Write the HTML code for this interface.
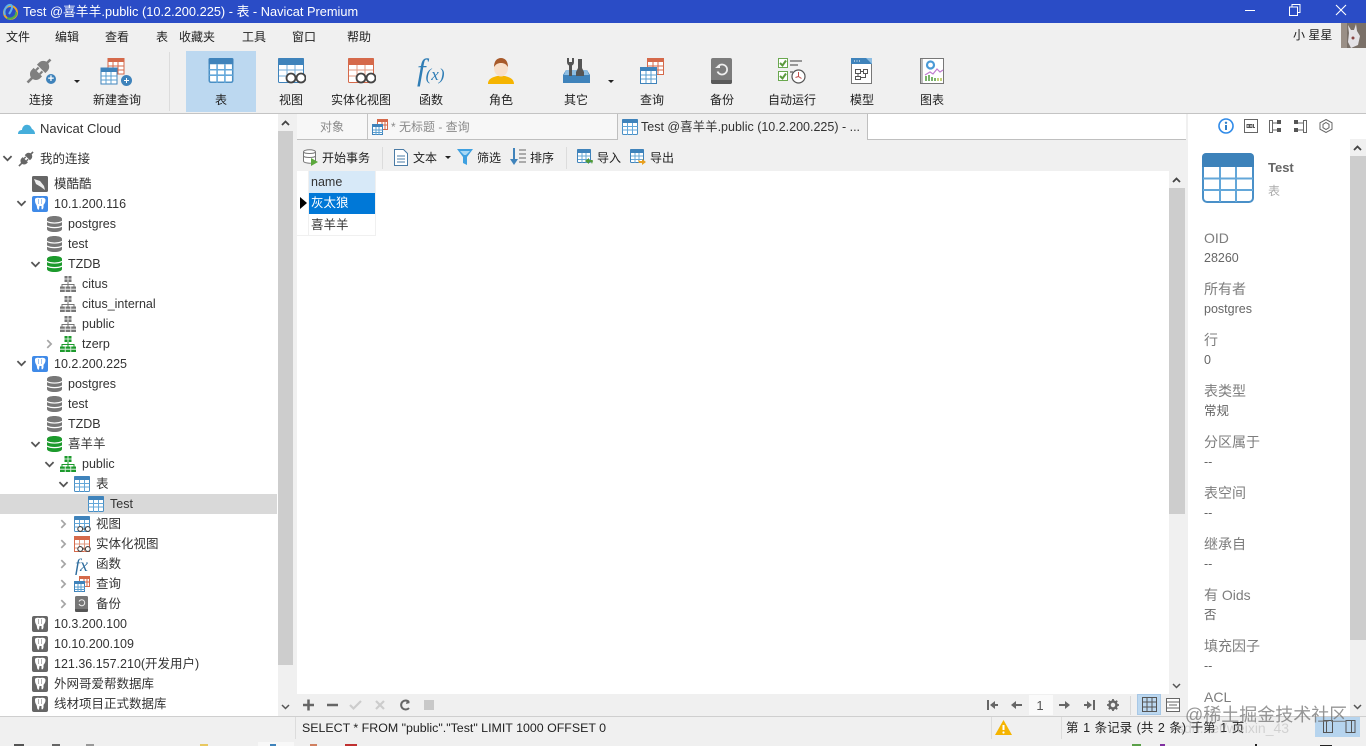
<!DOCTYPE html>
<html><head><meta charset="utf-8">
<style>
html,body{margin:0;padding:0;width:1366px;height:746px;overflow:hidden;background:#f0f0f0}
body{position:relative;font-family:"Liberation Sans","Noto Sans CJK SC",sans-serif;font-size:12px;color:#222}
.a,.t,svg.i{position:absolute}
.t{white-space:nowrap;line-height:16px;height:16px}
.c{text-align:center;transform:translateX(-50%)}
.n{font-size:12.5px;color:#333}
.l{font-size:14px;color:#7d7d7d;left:1204px;line-height:18px;height:18px}
.v{font-size:12.5px;color:#666;left:1204px}
svg.sd{width:11px;height:7px}
svg.sr{width:7px;height:10px}
svg.su{width:9px;height:6px}
</style></head><body>
<svg width="0" height="0" style="position:absolute">
<defs>
<symbol id="tb" viewBox="0 0 16 16"><rect x=".5" y=".5" width="15" height="15" rx="1" fill="#fff" stroke="#4a8fc4"/><rect x="0" y="0" width="16" height="4" rx="1" fill="#3f83bb"/><path d="M.5 7.5h15M.5 11h15M5.5 4v12M10.5 4v12" stroke="#63a7d9" fill="none"/></symbol>
<symbol id="db" viewBox="0 0 15 16"><path d="M0 3c0-4 15-4 15 0v10c0 4-15 4-15 0z" fill="currentColor"/><path d="M0 5.4c3 2.2 12 2.2 15 0M0 10c3 2.2 12 2.2 15 0" stroke="#fff" fill="none" stroke-width="1.2"/></symbol>
<symbol id="sc" viewBox="0 0 16 16"><g fill="currentColor"><rect x="4.500" y="0" width="7" height="6"/><rect x="0" y="10.500" width="4.800" height="5.500"/><rect x="5.600" y="10.500" width="4.800" height="5.500"/><rect x="11.200" y="10.500" width="4.800" height="5.500"/><path d="M7.500 6h1v2h6v2.500h-1V9h-5v1.500h-1V9h-5v1.500h-1V8h6z"/></g><path d="M4.500 3h7M8 0v6M0 13.200h4.800M5.600 13.200h4.800M11.200 13.200H16" stroke="#fff" stroke-width=".8" fill="none"/></symbol>
<symbol id="pg" viewBox="0 0 16 16"><rect width="16" height="16" rx="2" fill="currentColor"/><path d="M3 3.500C3 1.500 6 1.500 8 2c2-.5 5.500-.5 5.500 2 0 3-1.500 4-2 5v2c0 2-1.500 3-2 2v-3h-2L7 13.500C6 14 5 13 5 11L4.500 9C3 7 3 5 3 3.500z" fill="#fff"/><path d="M6.500 3v5M9.500 3v5" stroke="currentColor" stroke-opacity=".5" fill="none"/></symbol>
<symbol id="ad" viewBox="0 0 9 6"><path d="M1 1l3.500 3.500L8 1" fill="none" stroke="#555" stroke-width="1.500"/></symbol>
<symbol id="ar" viewBox="0 0 6 9"><path d="M1 1l3.500 3.500L1 8" fill="none" stroke="#a6a6a6" stroke-width="1.500"/></symbol>
<symbol id="up" viewBox="0 0 9 6"><path d="M1 5l3.500-3.500L8 5" fill="none" stroke="#444" stroke-width="1.800"/></symbol>
<symbol id="pl" viewBox="0 0 24 24"><g transform="rotate(45 12 12)" fill="currentColor"><path d="M6.500 13.500h11v2.500a5.500 5.500 0 0 1-11 0z"/><rect x="10.800" y="21" width="2.400" height="6"/><rect x="8.500" y="10" width="2" height="3.500"/><rect x="13.500" y="10" width="2" height="3.500"/><path d="M6.500 9.200h11V6.500a5.500 5.500 0 0 0-11 0z"/><rect x="10.800" y="-3" width="2.400" height="5"/></g></symbol>
<symbol id="gl" viewBox="0 0 14 6"><circle cx="3.200" cy="3" r="2.400" fill="#fff" stroke="#444" stroke-width="1.100"/><circle cx="10.800" cy="3" r="2.400" fill="#fff" stroke="#444" stroke-width="1.100"/><path d="M5.500 3h3" stroke="#444"/></symbol>
</defs>
</svg>

<!-- title bar -->
<div class="a" style="left:0;top:0;width:1366px;height:23px;background:#2a4cc6"></div>
<svg class="i" style="left:2px;top:3px" width="17" height="17" viewBox="0 0 17 17"><circle cx="8.500" cy="9.500" r="6.500" fill="none" stroke="#e8a62f" stroke-width="2"/><path d="M3 12C1 7 5 1 9 2c2 1 1 5-2 9" fill="none" stroke="#5fb2e8" stroke-width="2"/><path d="M5 15c5 2 10-2 9-6" fill="none" stroke="#4fae4f" stroke-width="2"/></svg>
<div class="t" style="left:23px;top:4px;color:#fff;font-size:12.8px">Test @喜羊羊.public (10.2.200.225) - 表 - Navicat Premium</div>
<div class="a" style="left:1245px;top:10px;width:10px;height:1px;background:#fff"></div>
<svg class="i" style="left:1289px;top:4px" width="12" height="12" viewBox="0 0 12 12"><path d="M3 2.500V.5h8v8H9M.5 3h8v8.500h-8z" fill="none" stroke="#fff"/></svg>
<svg class="i" style="left:1335px;top:4px" width="12" height="12" viewBox="0 0 12 12"><path d="M1 1l10 10M11 1L1 11" stroke="#fff" stroke-width="1.100"/></svg>

<!-- menu -->
<div class="t" style="left:6px;top:29px">文件</div>
<div class="t" style="left:55px;top:29px">编辑</div>
<div class="t" style="left:105px;top:29px">查看</div>
<div class="t" style="left:156px;top:29px">表</div>
<div class="t" style="left:179px;top:29px">收藏夹</div>
<div class="t" style="left:242px;top:29px">工具</div>
<div class="t" style="left:292px;top:29px">窗口</div>
<div class="t" style="left:347px;top:29px">帮助</div>
<div class="t" style="left:1293px;top:27px">小 星星</div>
<svg class="i" style="left:1341px;top:23px" width="25" height="25" viewBox="0 0 25 25"><rect width="25" height="25" fill="#7a7068"/><rect x="0" width="6" height="25" fill="#9a8f86"/><path d="M8 10l-1-8 3 5 3 0 2-6 1 7 3 5-2 9-7 3-3-6z" fill="#e4e2e6"/><circle cx="12" cy="15" r="1.500" fill="#844"/></svg>

<!-- toolbar -->
<div class="a" style="left:169px;top:52px;width:1px;height:59px;background:#dcdcdc"></div>
<div class="a" style="left:186px;top:51px;width:70px;height:61px;background:#bcd8f0"></div>

<svg class="i" style="left:26px;top:58px;color:#7f7f7f" width="26" height="26"><use href="#pl" width="26" height="26"/></svg>
<div class="a" style="left:46px;top:74px;width:10px;height:10px;border-radius:50%;background:#3f83bb"></div>
<div class="t" style="left:46px;top:71px;width:10px;color:#fff;font-size:11px;font-weight:bold;text-align:center">+</div>
<div class="a" style="left:74px;top:80px;border:3px solid transparent;border-top:3px solid #222"></div>
<!-- new query -->
<svg class="i" style="left:100px;top:58px" width="33" height="28" viewBox="0 0 33 28"><rect x="8" y="0" width="16" height="16" fill="#fff" stroke="#d5694a"/><rect x="8" y="0" width="16" height="4" fill="#d5694a"/><path d="M13 4v12M18 4v12M8 8h16M8 12h16" stroke="#d5694a" fill="none"/><rect x="1" y="10" width="16" height="16" fill="#fff" stroke="#3f83bb"/><rect x="1" y="10" width="16" height="4" fill="#3f83bb"/><path d="M6 14v12M11 14v12M1 18h16M1 22h16" stroke="#5a9fd0" fill="none"/><circle cx="26.500" cy="22.500" r="5.500" fill="#3f83bb"/><path d="M24 22.500h5M26.500 20v5" stroke="#fff"/></svg>
<!-- table -->
<svg class="i" style="left:208px;top:58px" width="26" height="25"><use href="#tb" width="26" height="25"/></svg>
<!-- view -->
<svg class="i" style="left:278px;top:58px" width="28" height="26" viewBox="0 0 28 26"><rect x=".5" y=".5" width="25" height="24" rx="1" fill="#fff" stroke="#3f83bb"/><rect width="26" height="7" rx="1" fill="#3f83bb"/><path d="M9 7v17M17 7v17M1 12h24M1 18h24" stroke="#75aeda" fill="none"/><circle cx="13" cy="20" r="4.500" fill="#fff" stroke="#444" stroke-width="1.800"/><circle cx="23" cy="20" r="4.500" fill="#fff" stroke="#444" stroke-width="1.800"/></svg>
<!-- mat view -->
<svg class="i" style="left:348px;top:58px" width="28" height="26" viewBox="0 0 28 26"><rect x=".5" y=".5" width="25" height="24" rx="1" fill="#fff" stroke="#d5694a"/><rect width="26" height="7" rx="1" fill="#d5694a"/><path d="M9 7v17M17 7v17M1 12h24M1 18h24" stroke="#e09a82" fill="none"/><circle cx="13" cy="20" r="4.500" fill="#fff" stroke="#444" stroke-width="1.800"/><circle cx="23" cy="20" r="4.500" fill="#fff" stroke="#444" stroke-width="1.800"/></svg>
<!-- fx -->
<div class="t" style="left:417px;top:55px;height:30px;line-height:30px;font-family:'Liberation Serif',serif;font-style:italic;color:#2f7db5"><span style="font-size:31px">f</span><span style="font-size:17px">(x)</span></div>
<!-- role -->
<svg class="i" style="left:488px;top:58px" width="26" height="26" viewBox="0 0 26 26"><path d="M0 26c0-6 6-7 9-8h8c3 1 9 2 9 8z" fill="#f5b400"/><ellipse cx="13" cy="10" rx="7" ry="8.500" fill="#f8dfc9"/><path d="M6 9c0-6 3-9 7-9s7 3 7 9c-2-3-4-4-7-4S8 6 6 9z" fill="#a85a2a"/></svg>
<!-- other -->
<svg class="i" style="left:563px;top:58px" width="27" height="25" viewBox="0 0 27 25"><path d="M3 12h21l3 5v8H0v-8z" fill="#3f83bb"/><path d="M3 12h21l2 5H1z" fill="#8dbde2"/><path d="M4 0v4c0 2 1 3 2 3.500V18h3V7.500c1-.5 2-1.500 2-3.500V0L9 0v4H6V0z" fill="#555"/><path d="M15 1h4v9l2 4v4h-8v-4l2-4z" fill="#555"/></svg>
<div class="a" style="left:608px;top:80px;border:3px solid transparent;border-top:3px solid #222"></div>
<!-- query -->
<svg class="i" style="left:640px;top:58px" width="24" height="26" viewBox="0 0 24 26"><rect x="7.500" y=".5" width="16" height="16" fill="#fff" stroke="#d5694a"/><rect x="7" y="0" width="17" height="4" fill="#d5694a"/><path d="M13 4v12M18 4v12M8 8h16M8 12h16" stroke="#d5694a" fill="none"/><rect x=".5" y="9.500" width="16" height="16" fill="#fff" stroke="#3f83bb"/><rect x="0" y="9" width="17" height="4" fill="#3f83bb"/><path d="M6 13v12M11 13v12M1 17h16M1 21h16" stroke="#5a9fd0" fill="none"/></svg>
<!-- backup -->
<svg class="i" style="left:711px;top:58px" width="21" height="26" viewBox="0 0 21 26"><rect width="21" height="26" rx="2" fill="#7c7c7c"/><path d="M0 22h21v2a2 2 0 0 1-2 2H2a2 2 0 0 1-2-2z" fill="#5a5a5a"/><path d="M6.500 9.500a5 5 0 1 1 0 4" fill="none" stroke="#eee" stroke-width="1.800"/><path d="M4 10h5V6z" fill="#eee"/></svg>
<!-- auto run -->
<svg class="i" style="left:778px;top:58px" width="28" height="26" viewBox="0 0 28 26"><rect x=".5" y=".5" width="9" height="9" fill="#fff" stroke="#6aa84f"/><rect x=".5" y="13.500" width="9" height="9" fill="#fff" stroke="#6aa84f"/><path d="M2 5l2.500 2.500L8 2.500M2 18l2.500 2.500L8 15.500" fill="none" stroke="#5c9a3e" stroke-width="2"/><path d="M12 3h12M12 7h8" stroke="#8a8a8a" stroke-width="1.800"/><path d="M12 14h3" stroke="#8a8a8a" stroke-width="1.800"/><circle cx="20.500" cy="18.500" r="6.500" fill="#fff" stroke="#555" stroke-width="1.200"/><path d="M20.500 14v4.500l3 2M20.500 18.500l-3 1" stroke="#c0504d" fill="none"/></svg>
<!-- model -->
<svg class="i" style="left:851px;top:58px" width="21" height="26" viewBox="0 0 21 26"><rect x=".5" y=".5" width="20" height="25" fill="#fff" stroke="#777"/><rect width="21" height="6" fill="#3f83bb"/><path d="M15 0h6v6z" fill="#8dbde2"/><path d="M3 3h1M5.500 3h1M8 3h1" stroke="#fff"/><path d="M4.500 11.500h5v4h-5zM12.500 11.500h4v4h-4zM4.500 18.500h5v3h-5zM9.500 13.500h3M7 15.500v3M14.500 15.500v4h-5" stroke="#555" fill="none"/></svg>
<!-- chart -->
<svg class="i" style="left:920px;top:58px" width="24" height="26" viewBox="0 0 24 26"><rect x=".5" y=".5" width="23" height="25" fill="#fff" stroke="#777"/><path d="M2 1v24" stroke="#777"/><circle cx="10.500" cy="7" r="3.500" fill="#fff" stroke="#4a9ad6" stroke-width="2.200"/><path d="M5 17l5-3 3 2 4-5 3 3 3-2" fill="none" stroke="#c07ad0" stroke-width="1.200"/><path d="M6 23v-5M9 23v-6M12 23v-4M15 23v-3" stroke="#5aa048" stroke-width="1.600"/><path d="M18 23v-3M21 23v-3" stroke="#b5c85a" stroke-width="1.600"/></svg>

<div class="t c" style="left:41px;top:92px">连接</div>
<div class="t c" style="left:117px;top:92px">新建查询</div>
<div class="t c" style="left:221px;top:92px">表</div>
<div class="t c" style="left:291px;top:92px">视图</div>
<div class="t c" style="left:361px;top:92px">实体化视图</div>
<div class="t c" style="left:431px;top:92px">函数</div>
<div class="t c" style="left:501px;top:92px">角色</div>
<div class="t c" style="left:576px;top:92px">其它</div>
<div class="t c" style="left:652px;top:92px">查询</div>
<div class="t c" style="left:722px;top:92px">备份</div>
<div class="t c" style="left:792px;top:92px">自动运行</div>
<div class="t c" style="left:862px;top:92px">模型</div>
<div class="t c" style="left:932px;top:92px">图表</div>

<div class="a" style="left:0;top:113px;width:1366px;height:1px;background:#c4c4c4"></div>

<!-- left tree -->
<div class="a" style="left:0;top:114px;width:278px;height:602px;background:#fff"></div>
<div class="a" style="left:0;top:494px;width:277px;height:20px;background:#d9d9d9"></div>
<svg class="i" style="left:18px;top:123px" width="17" height="11" viewBox="0 0 17 11"><path d="M0 11c0-3 2-4 4-4 0-3 3-6 6-5 2 0 3 2 4 4 2 1 3 3 3 5z" fill="#45aedb"/></svg>
<div class="t n" style="left:40px;top:121px;font-size:13px">Navicat Cloud</div>

<svg class="i sd" style="left:2px;top:155px"><use href="#ad" width="11" height="7"/></svg>
<svg class="i" style="left:18px;top:151px;color:#666" width="16" height="16"><use href="#pl" width="16" height="16"/></svg>
<div class="t n" style="left:40px;top:151px">我的连接</div>

<svg class="i" style="left:32px;top:176px" width="16" height="16" viewBox="0 0 16 16"><rect width="16" height="16" rx="1.500" fill="#666"/><path d="M2 3l6 2 4 5 1 4-4-3-5-3z" fill="#eee"/></svg>
<div class="t n" style="left:54px;top:176px">模酷酷</div>

<svg class="i sd" style="left:16px;top:200px"><use href="#ad" width="11" height="7"/></svg>
<svg class="i" style="left:32px;top:196px;color:#3f8ae8" width="16" height="16"><use href="#pg" width="16" height="16"/></svg>
<div class="t n" style="left:54px;top:196px">10.1.200.116</div>

<svg class="i" style="left:47px;top:216px;color:#777" width="15" height="16"><use href="#db" width="15" height="16"/></svg>
<div class="t n" style="left:68px;top:216px">postgres</div>
<svg class="i" style="left:47px;top:236px;color:#777" width="15" height="16"><use href="#db" width="15" height="16"/></svg>
<div class="t n" style="left:68px;top:236px">test</div>
<svg class="i sd" style="left:30px;top:261px"><use href="#ad" width="11" height="7"/></svg>
<svg class="i" style="left:47px;top:256px;color:#1c9a2c" width="15" height="16"><use href="#db" width="15" height="16"/></svg>
<div class="t n" style="left:68px;top:256px">TZDB</div>

<svg class="i" style="left:60px;top:276px;color:#777" width="16" height="16"><use href="#sc" width="16" height="16"/></svg>
<div class="t n" style="left:82px;top:276px">citus</div>
<svg class="i" style="left:60px;top:296px;color:#777" width="16" height="16"><use href="#sc" width="16" height="16"/></svg>
<div class="t n" style="left:82px;top:296px">citus_internal</div>
<svg class="i" style="left:60px;top:316px;color:#777" width="16" height="16"><use href="#sc" width="16" height="16"/></svg>
<div class="t n" style="left:82px;top:316px">public</div>
<svg class="i sr" style="left:46px;top:339px"><use href="#ar" width="7" height="10"/></svg>
<svg class="i" style="left:60px;top:336px;color:#1c9a2c" width="16" height="16"><use href="#sc" width="16" height="16"/></svg>
<div class="t n" style="left:82px;top:336px">tzerp</div>

<svg class="i sd" style="left:16px;top:360px"><use href="#ad" width="11" height="7"/></svg>
<svg class="i" style="left:32px;top:356px;color:#3f8ae8" width="16" height="16"><use href="#pg" width="16" height="16"/></svg>
<div class="t n" style="left:54px;top:356px">10.2.200.225</div>

<svg class="i" style="left:47px;top:376px;color:#777" width="15" height="16"><use href="#db" width="15" height="16"/></svg>
<div class="t n" style="left:68px;top:376px">postgres</div>
<svg class="i" style="left:47px;top:396px;color:#777" width="15" height="16"><use href="#db" width="15" height="16"/></svg>
<div class="t n" style="left:68px;top:396px">test</div>
<svg class="i" style="left:47px;top:416px;color:#777" width="15" height="16"><use href="#db" width="15" height="16"/></svg>
<div class="t n" style="left:68px;top:416px">TZDB</div>
<svg class="i sd" style="left:30px;top:441px"><use href="#ad" width="11" height="7"/></svg>
<svg class="i" style="left:47px;top:436px;color:#1c9a2c" width="15" height="16"><use href="#db" width="15" height="16"/></svg>
<div class="t n" style="left:68px;top:436px">喜羊羊</div>
<svg class="i sd" style="left:44px;top:461px"><use href="#ad" width="11" height="7"/></svg>
<svg class="i" style="left:60px;top:456px;color:#1c9a2c" width="16" height="16"><use href="#sc" width="16" height="16"/></svg>
<div class="t n" style="left:82px;top:456px">public</div>
<svg class="i sd" style="left:58px;top:481px"><use href="#ad" width="11" height="7"/></svg>
<svg class="i" style="left:74px;top:476px" width="16" height="16"><use href="#tb" width="16" height="16"/></svg>
<div class="t n" style="left:96px;top:476px">表</div>
<svg class="i" style="left:88px;top:496px" width="16" height="16"><use href="#tb" width="16" height="16"/></svg>
<div class="t n" style="left:110px;top:496px">Test</div>

<svg class="i sr" style="left:60px;top:519px"><use href="#ar" width="7" height="10"/></svg>
<svg class="i" style="left:74px;top:516px" width="16" height="16"><use href="#tb" width="16" height="16"/></svg>
<svg class="i" style="left:77px;top:526px" width="14" height="6"><use href="#gl" width="14" height="6"/></svg>
<div class="t n" style="left:96px;top:516px">视图</div>

<svg class="i sr" style="left:60px;top:539px"><use href="#ar" width="7" height="10"/></svg>
<svg class="i" style="left:74px;top:536px" width="16" height="16" viewBox="0 0 16 16"><rect x=".5" y=".5" width="15" height="15" fill="#fff" stroke="#d5694a"/><rect width="16" height="4" fill="#d5694a"/><path d="M5.500 4v12M10.500 4v12M1 8h14M1 12h14" stroke="#e09a82"/></svg>
<svg class="i" style="left:77px;top:546px" width="14" height="6"><use href="#gl" width="14" height="6"/></svg>
<div class="t n" style="left:96px;top:536px">实体化视图</div>

<svg class="i sr" style="left:60px;top:559px"><use href="#ar" width="7" height="10"/></svg>
<div class="t" style="left:75px;top:556px;font-family:'Liberation Serif',serif;font-style:italic;font-size:18px;color:#2f6d9e;height:18px;line-height:18px">fx</div>
<div class="t n" style="left:96px;top:556px">函数</div>

<svg class="i sr" style="left:60px;top:579px"><use href="#ar" width="7" height="10"/></svg>
<svg class="i" style="left:74px;top:576px" width="16" height="16" viewBox="0 0 16 16"><rect x="5.500" y=".5" width="10" height="10" fill="#fff" stroke="#d5694a"/><rect x="5" y="0" width="11" height="3" fill="#d5694a"/><path d="M10 3v8M13 3v8M6 6h10" stroke="#d5694a"/><rect x=".5" y="5.500" width="10" height="10" fill="#fff" stroke="#3f83bb"/><rect y="5" width="11" height="3" fill="#3f83bb"/><path d="M4 8v8M7 8v8M1 11h10M1 13.500h10" stroke="#5a9fd0"/></svg>
<div class="t n" style="left:96px;top:576px">查询</div>

<svg class="i sr" style="left:60px;top:599px"><use href="#ar" width="7" height="10"/></svg>
<svg class="i" style="left:75px;top:596px" width="13" height="16" viewBox="0 0 13 16"><rect width="13" height="16" rx="1.500" fill="#777"/><path d="M0 13h13v1.500a1.500 1.500 0 0 1-1.500 1.500h-10A1.500 1.500 0 0 1 0 14.500z" fill="#555"/><path d="M4 5.500a3 3 0 1 1 0 2.500" fill="none" stroke="#eee"/></svg>
<div class="t n" style="left:96px;top:596px">备份</div>

<svg class="i" style="left:32px;top:616px;color:#666" width="16" height="16"><use href="#pg" width="16" height="16"/></svg>
<div class="t n" style="left:54px;top:616px">10.3.200.100</div>
<svg class="i" style="left:32px;top:636px;color:#666" width="16" height="16"><use href="#pg" width="16" height="16"/></svg>
<div class="t n" style="left:54px;top:636px">10.10.200.109</div>
<svg class="i" style="left:32px;top:656px;color:#666" width="16" height="16"><use href="#pg" width="16" height="16"/></svg>
<div class="t n" style="left:54px;top:656px">121.36.157.210(开发用户)</div>
<svg class="i" style="left:32px;top:676px;color:#666" width="16" height="16"><use href="#pg" width="16" height="16"/></svg>
<div class="t n" style="left:54px;top:676px">外网哥爱帮数据库</div>
<svg class="i" style="left:32px;top:696px;color:#666" width="16" height="16"><use href="#pg" width="16" height="16"/></svg>
<div class="t n" style="left:54px;top:696px">线材项目正式数据库</div>

<!-- left scrollbar -->
<div class="a" style="left:278px;top:114px;width:15px;height:602px;background:#f0f0f0"></div>
<div class="a" style="left:278px;top:131px;width:15px;height:534px;background:#cdcdcd"></div>
<svg class="i su" style="left:281px;top:120px"><use href="#up" width="9" height="6"/></svg>
<svg class="i su" style="left:281px;top:704px"><use href="#ad" width="9" height="6"/></svg>
<div class="a" style="left:0;top:716px;width:1366px;height:1px;background:#cfcfcf"></div>

<!-- tabs -->
<div class="a" style="left:297px;top:114px;width:889px;height:25px;background:#f7f7f7"></div>
<div class="a" style="left:297px;top:139px;width:889px;height:1px;background:#bfbfbf"></div>
<div class="a" style="left:367px;top:114px;width:1px;height:25px;background:#c4c4c4"></div>
<div class="a" style="left:617px;top:114px;width:251px;height:26px;background:#f0f0f0;border-left:1px solid #bfbfbf;border-right:1px solid #bfbfbf;box-sizing:border-box"></div>
<div class="a" style="left:868px;top:114px;width:318px;height:25px;background:#fff"></div>
<div class="t c" style="left:332px;top:119px;color:#8a8a8a">对象</div>
<svg class="i" style="left:372px;top:119px" width="16" height="16" viewBox="0 0 16 16"><rect x="5.500" y=".5" width="10" height="10" fill="#fff" stroke="#d5694a"/><rect x="5" y="0" width="11" height="3" fill="#d5694a"/><path d="M10 3v8M13 3v8M6 6h10" stroke="#d5694a"/><rect x=".5" y="5.500" width="10" height="10" fill="#fff" stroke="#3f83bb"/><rect y="5" width="11" height="3" fill="#3f83bb"/><path d="M4 8v8M7 8v8M1 11h10M1 13.500h10" stroke="#5a9fd0"/></svg>
<div class="t" style="left:391px;top:119px;color:#8a8a8a">* 无标题 - 查询</div>
<svg class="i" style="left:622px;top:119px" width="16" height="16"><use href="#tb" width="16" height="16"/></svg>
<div class="t" style="left:641px;top:119px;font-size:12.5px;color:#333">Test @喜羊羊.public (10.2.200.225) - ...</div>

<!-- sub toolbar -->
<svg class="i" style="left:303px;top:149px" width="16" height="17" viewBox="0 0 16 17"><path d="M.5 3c0-3 12-3 12 0v9c0 2-6 2.500-8 2-2-.200-4-1-4-2z" fill="#fff" stroke="#777"/><path d="M.5 3c1 2 11 2 12 0M.5 7c1 2 11 2 12 0" fill="none" stroke="#777"/><path d="M8 9l7 4-7 4z" fill="#5ba83c"/></svg>
<div class="t" style="left:322px;top:150px">开始事务</div>
<div class="a" style="left:382px;top:147px;width:1px;height:22px;background:#dcdcdc"></div>
<svg class="i" style="left:394px;top:149px" width="14" height="17" viewBox="0 0 14 17"><path d="M.5.5h9l4 4v12H.5z" fill="#fff" stroke="#4a7ba5"/><path d="M3 7h8M3 10h8M3 13h8" stroke="#4a7ba5"/></svg>
<div class="t" style="left:413px;top:150px">文本</div>
<div class="a" style="left:445px;top:156px;border:3px solid transparent;border-top:3px solid #222"></div>
<svg class="i" style="left:457px;top:149px" width="16" height="16" viewBox="0 0 16 16"><path d="M0 0h16L10 8v8l-4-2V8z" fill="#3ea0e0"/><path d="M3 2h10l-4 4H7z" fill="#a8d8f5"/></svg>
<div class="t" style="left:477px;top:150px">筛选</div>
<svg class="i" style="left:510px;top:148px" width="16" height="18" viewBox="0 0 16 18"><path d="M4 0v12" stroke="#3f83bb" stroke-width="2"/><path d="M0 11h8l-4 6z" fill="#3f83bb"/><path d="M9 2h7M9 6h7M9 10h7M9 14h7" stroke="#666"/></svg>
<div class="t" style="left:530px;top:150px">排序</div>
<div class="a" style="left:566px;top:147px;width:1px;height:22px;background:#dcdcdc"></div>
<svg class="i" style="left:577px;top:149px" width="17" height="16" viewBox="0 0 17 16"><rect x=".5" y=".5" width="13" height="13" rx="1" fill="#fff" stroke="#3f83bb"/><rect width="14" height="4" rx="1" fill="#3f83bb"/><path d="M5 4v10M9 4v10M1 7h12M1 10.500h12" stroke="#6aa8d6"/><path d="M12 9l-4 3 4 3v-2h2l1 2 1-3c0-1-1-1-2-1h-2z" fill="#4e9a3a"/></svg>
<div class="t" style="left:597px;top:150px">导入</div>
<svg class="i" style="left:630px;top:149px" width="17" height="17" viewBox="0 0 17 17"><rect x=".5" y=".5" width="13" height="13" rx="1" fill="#fff" stroke="#3f83bb"/><rect width="14" height="4" rx="1" fill="#3f83bb"/><path d="M5 4v10M9 4v10M1 7h12M1 10.500h12" stroke="#6aa8d6"/><path d="M12 10l4 3-4 3v-2H9L8 11l2 1h2z" fill="#e8a020"/></svg>
<div class="t" style="left:650px;top:150px">导出</div>

<!-- grid -->
<div class="a" style="left:297px;top:171px;width:872px;height:523px;background:#fff"></div>
<div class="a" style="left:309px;top:171px;width:66px;height:22px;background:#d7e9f8"></div>
<div class="t" style="left:311px;top:174px;font-size:12.5px;color:#333">name</div>
<div class="a" style="left:309px;top:193px;width:66px;height:21px;background:#0078d7"></div>
<div class="t" style="left:311px;top:195px;color:#fff;font-size:12.5px">灰太狼</div>
<div class="t" style="left:311px;top:217px;font-size:12.5px;color:#333">喜羊羊</div>
<div class="a" style="left:300px;top:197px;border:6px solid transparent;border-left:7px solid #000;border-right:0"></div>
<div class="a" style="left:297px;top:235px;width:79px;height:1px;background:#f0f0f0"></div>
<div class="a" style="left:375px;top:171px;width:1px;height:65px;background:#f0f0f0"></div>
<div class="a" style="left:308px;top:171px;width:1px;height:65px;background:#f0f0f0"></div>

<!-- grid scrollbar -->
<div class="a" style="left:1169px;top:171px;width:16px;height:523px;background:#f0f0f0"></div>
<div class="a" style="left:1169px;top:188px;width:16px;height:326px;background:#cdcdcd"></div>
<svg class="i su" style="left:1172px;top:177px"><use href="#up" width="9" height="6"/></svg>
<svg class="i su" style="left:1172px;top:683px"><use href="#ad" width="9" height="6"/></svg>

<!-- grid bottom bar -->
<svg class="i" style="left:303px;top:699px" width="132" height="12" viewBox="0 0 132 12"><path d="M0 6h11M5.500 .5v11" stroke="#666" stroke-width="2.500"/><path d="M24 6h11" stroke="#666" stroke-width="2.500"/><path d="M47 6l3.500 3.500L58 2" stroke="#ccc" stroke-width="2.200" fill="none"/><path d="M73 2l8 8M81 2l-8 8" stroke="#ccc" stroke-width="2.200"/><path d="M106 3a4.500 4.500 0 1 0 0 6" fill="none" stroke="#666" stroke-width="2"/><path d="M104 1l3 3-4 1z" fill="#666"/><rect x="121" y="1" width="10" height="10" fill="#c8c8c8"/></svg>
<svg class="i" style="left:986px;top:699px" width="122" height="12" viewBox="0 0 122 12"><path d="M2 1v10" stroke="#666" stroke-width="2"/><path d="M4 6l5-4v3h3v2H9v3z" fill="#666"/><path d="M25 6l5-4v3h6v2h-6v3z" fill="#666"/><path d="M84 6l-5-4v3h-6v2h6v3z" fill="#666"/><path d="M108 1v10" stroke="#666" stroke-width="2"/><path d="M106 6l-5-4v3h-3v2h3v3z" fill="#666"/></svg>
<div class="a" style="left:1029px;top:695px;width:24px;height:20px;background:#fafafa"></div>
<div class="t c" style="left:1040px;top:698px;font-size:13px;color:#555">1</div>
<svg class="i" style="left:1107px;top:699px" width="12" height="12" viewBox="0 0 12 12"><circle cx="6" cy="6" r="3.500" fill="none" stroke="#666" stroke-width="2.500"/><path d="M6 0v2M6 10v2M0 6h2M10 6h2M1.800 1.800l1.400 1.400M8.800 8.800l1.400 1.400M1.800 10.200l1.400-1.400M8.800 3.200l1.400-1.400" stroke="#666" stroke-width="1.800"/></svg>
<div class="a" style="left:1130px;top:696px;width:1px;height:19px;background:#d8d8d8"></div>
<div class="a" style="left:1137px;top:694px;width:24px;height:21px;background:#bcd8f0;border:1px solid #a8c8e6;box-sizing:border-box"></div>
<svg class="i" style="left:1142px;top:697px" width="15" height="15" viewBox="0 0 15 15"><path d="M.5.5h14v14H.5zM5 .5v14M10 .5v14M.5 5h14M.5 10h14" fill="none" stroke="#555"/></svg>
<svg class="i" style="left:1166px;top:698px" width="14" height="14" viewBox="0 0 14 14"><rect x=".5" y=".5" width="13" height="13" fill="#fff" stroke="#666"/><path d="M.5 4h13M.5 10h13M3 7h8" stroke="#666"/></svg>

<!-- right panel -->
<div class="a" style="left:1188px;top:114px;width:178px;height:602px;background:#fff"></div>
<div class="a" style="left:1350px;top:139px;width:16px;height:577px;background:#f0f0f0"></div>
<div class="a" style="left:1350px;top:156px;width:16px;height:484px;background:#cdcdcd"></div>
<svg class="i su" style="left:1353px;top:145px"><use href="#up" width="9" height="6"/></svg>
<svg class="i su" style="left:1353px;top:704px"><use href="#ad" width="9" height="6"/></svg>

<svg class="i" style="left:1218px;top:118px" width="16" height="16" viewBox="0 0 16 16"><circle cx="8" cy="8" r="7" fill="#fff" stroke="#2f8ae8" stroke-width="1.600"/><circle cx="8" cy="4.800" r="1.200" fill="#2f7fc8"/><path d="M8 7v5" stroke="#2f7fc8" stroke-width="2"/></svg>
<svg class="i" style="left:1244px;top:119px" width="14" height="14" viewBox="0 0 14 14"><rect x=".5" y=".5" width="13" height="13" fill="#fff" stroke="#666"/><path d="M3 5.500h2v3H3zM6 5.500h2v3H6zM9.500 5v3.500H11" fill="none" stroke="#555"/></svg>
<svg class="i" style="left:1269px;top:120px" width="13" height="13" viewBox="0 0 13 13"><path d="M.5.500h3v12h-3z" fill="none" stroke="#666"/><path d="M4 3h4M4 10h4" stroke="#666"/><rect x="8" y="0" width="4" height="4" fill="#555"/><rect x="8" y="8" width="4" height="4" fill="#555"/></svg>
<svg class="i" style="left:1294px;top:120px" width="13" height="13" viewBox="0 0 13 13"><path d="M9.500.500h3v12h-3z" fill="none" stroke="#666"/><path d="M4 3h5M4 10h5" stroke="#666"/><rect x="0" y="0" width="4" height="4" fill="#555"/><rect x="0" y="8" width="4" height="4" fill="#555"/></svg>
<svg class="i" style="left:1319px;top:119px" width="14" height="14" viewBox="0 0 14 14"><path d="M7 .5l6 3.300v6.400l-6 3.300-6-3.300V3.800z" fill="#fff" stroke="#666"/><path d="M7 3.500l3 1.800v3.400l-3 1.800-3-1.800V5.300z" fill="none" stroke="#666"/></svg>

<svg class="i" style="left:1202px;top:153px" width="52" height="50" viewBox="0 0 52 50"><rect x="1" y="1" width="50" height="48" rx="4" fill="#fff" stroke="#4a90c8" stroke-width="2"/><path d="M0 14V4a4 4 0 0 1 4-4h44a4 4 0 0 1 4 4v10z" fill="#3d82ba"/><path d="M18 14v35M34 14v35M1 25.500h50M1 37h50" stroke="#63a7d9" stroke-width="2"/></svg>
<div class="t" style="left:1268px;top:160px;font-size:13px;font-weight:bold;color:#666">Test</div>
<div class="t" style="left:1268px;top:183px;color:#aaa">表</div>

<div class="t l" style="top:229px">OID</div><div class="t v" style="top:250px">28260</div>
<div class="t l" style="top:280px">所有者</div><div class="t v" style="top:301px">postgres</div>
<div class="t l" style="top:331px">行</div><div class="t v" style="top:352px">0</div>
<div class="t l" style="top:382px">表类型</div><div class="t v" style="top:403px">常规</div>
<div class="t l" style="top:433px">分区属于</div><div class="t v" style="top:454px">--</div>
<div class="t l" style="top:484px">表空间</div><div class="t v" style="top:505px">--</div>
<div class="t l" style="top:535px">继承自</div><div class="t v" style="top:556px">--</div>
<div class="t l" style="top:586px">有 Oids</div><div class="t v" style="top:607px">否</div>
<div class="t l" style="top:637px">填充因子</div><div class="t v" style="top:658px">--</div>
<div class="t l" style="top:688px">ACL</div>

<!-- status -->
<div class="a" style="left:0;top:717px;width:1366px;height:29px;background:#f0f0f0"></div>
<div class="a" style="left:295px;top:717px;width:1px;height:22px;background:#dcdcdc"></div>
<div class="t" style="left:302px;top:720px;font-size:12.4px;color:#222">SELECT * FROM "public"."Test" LIMIT 1000 OFFSET 0</div>
<div class="a" style="left:991px;top:717px;width:1px;height:22px;background:#dcdcdc"></div>
<svg class="i" style="left:995px;top:720px" width="17" height="15" viewBox="0 0 17 15"><path d="M8.500 0L17 15H0z" fill="#f5b400"/><path d="M8.500 5v5" stroke="#fff" stroke-width="2"/><circle cx="8.500" cy="12.500" r="1.100" fill="#fff"/></svg>
<div class="a" style="left:1061px;top:717px;width:1px;height:22px;background:#dcdcdc"></div>
<div class="t" style="left:1066px;top:720px;font-size:12.5px;word-spacing:1.100px;color:#222">第 1 条记录 (共 2 条) 于第 1 页</div>
<div class="a" style="left:1315px;top:717px;width:45px;height:20px;background:#b6d4ee"></div>
<svg class="i" style="left:1322px;top:720px" width="36" height="14" viewBox="0 0 36 14"><path d="M1.500.5h9v12h-9zM4.500.5v12" fill="none" stroke="#555"/><path d="M24 .5h9v12h-9zM29.500.5v12" fill="none" stroke="#555"/></svg>
<div class="t" style="left:1185px;top:703px;font-size:18px;height:24px;line-height:24px;color:rgba(110,110,110,.72)">@稀土掘金技术社区</div>
<div class="t" style="left:1170px;top:720px;font-size:14px;color:rgba(130,130,130,.28)">csdn.net/weixin_43</div>

<!-- bottom specks -->
<div class="a" style="left:14px;top:744px;width:10px;height:2px;background:#555"></div>
<div class="a" style="left:52px;top:744px;width:8px;height:2px;background:#666"></div>
<div class="a" style="left:86px;top:744px;width:8px;height:2px;background:#999"></div>
<div class="a" style="left:200px;top:744px;width:8px;height:2px;background:#e8c860"></div>
<div class="a" style="left:258px;top:742px;width:36px;height:4px;background:#f8f8f8"></div>
<div class="a" style="left:270px;top:744px;width:6px;height:2px;background:#3f83bb"></div>
<div class="a" style="left:310px;top:744px;width:7px;height:2px;background:#d08060"></div>
<div class="a" style="left:345px;top:744px;width:12px;height:2px;background:#c03030"></div>
<div class="a" style="left:1132px;top:744px;width:9px;height:2px;background:#5aa048"></div>
<div class="a" style="left:1160px;top:744px;width:5px;height:2px;background:#8030a0"></div>
<div class="a" style="left:1255px;top:744px;width:2px;height:2px;background:#222"></div>
<div class="a" style="left:1320px;top:745px;width:12px;height:1px;background:#222"></div>
</body></html>
